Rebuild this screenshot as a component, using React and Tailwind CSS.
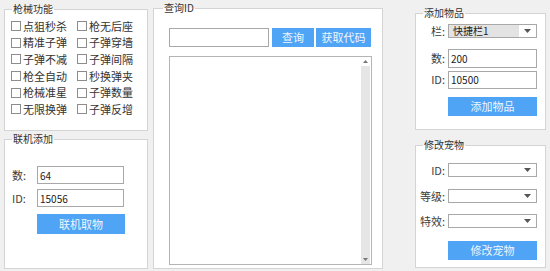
import React from "react";

function Group({ title, className = "", legendClass = "ml-[7px]", children }) {
  return (
    <fieldset className={`border border-[#d4d4d4] bg-white ${className}`}>
      <legend className={`${legendClass} px-[1px] text-[10px] leading-[12px] text-[#333]`}>
        {title}
      </legend>
      {children}
    </fieldset>
  );
}

function Check({ label }) {
  return (
    <div className="flex items-center gap-[2px] text-[11px] leading-none text-[#333]">
      <span className="w-[10px] h-[10px] border border-[#8c8c8c] bg-white" />
      {label}
    </div>
  );
}

function Arrow() {
  return (
    <svg width="7" height="4" viewBox="0 0 7 4">
      <path d="M0 0 L7 0 L3.5 4 Z" fill="#555" />
    </svg>
  );
}

function Input({ value, className = "" }) {
  return (
    <div
      className={`border border-[#a8a8a8] bg-white text-[10px] text-[#222] pl-[2px] flex items-center ${className}`}
    >
      {value}
    </div>
  );
}

function Select({ value, filled }) {
  return (
    <div className="ml-[3px] w-[89px] h-[14px] border border-[#a8a8a8] bg-white flex">
      <div
        className={`flex-1 h-full text-[10px] leading-[12px] pl-[4px] text-[#222] ${
          filled ? "bg-[#e3e3e3]" : ""
        }`}
      >
        {value}
      </div>
      <div className="w-[17px] flex items-center justify-center">
        <Arrow />
      </div>
    </div>
  );
}

function BlueButton({ label, className = "" }) {
  return (
    <button
      className={`bg-[#4fa4f5] text-[#eef6ff] text-[11px] leading-none flex items-center justify-center ${className}`}
    >
      {label}
    </button>
  );
}

const checks = [
  "点狙秒杀", "枪无后座",
  "精准子弹", "子弹穿墙",
  "子弹不减", "子弹间隔",
  "枪全自动", "秒换弹夹",
  "枪械准星", "子弹数量",
  "无限换弹", "子弹反增",
];

export default function App() {
  return (
    <div className="w-[550px] h-[271px] bg-[#f0f0f0] flex font-['Noto_Sans_CJK_SC','Liberation_Sans',sans-serif]">
      {/* left column */}
      <div className="ml-[4px] w-[144px] flex flex-col">
        <Group title="枪械功能" className="mt-[3px] h-[128px]">
          <div className="mt-[3px] pl-[6px] grid grid-cols-[66px_auto] auto-rows-[16.6px]">
            {checks.map((c) => (
              <Check key={c} label={c} />
            ))}
          </div>
        </Group>
        <Group title="联机添加" className="mt-[2px] h-[136px]">
          <div className="pt-[21px] pl-[7px] flex flex-col">
            <div className="flex items-center">
              <span className="w-[25px] text-[11px] text-[#3c3c3c]">数:</span>
              <Input value="64" className="w-[87px] h-[18px]" />
            </div>
            <div className="flex items-center mt-[5px]">
              <span className="w-[25px] text-[11px] text-[#3c3c3c]">ID:</span>
              <Input value="15056" className="w-[87px] h-[18px]" />
            </div>
            <BlueButton label="联机取物" className="ml-[25px] mt-[7px] w-[88px] h-[20px]" />
          </div>
        </Group>
      </div>

      {/* middle column */}
      <Group title="查询ID" legendClass="ml-[9px]" className="ml-[5px] mt-[2px] w-[230px] h-[267px]">
        <div className="pt-[14px] pl-[15px]">
          <div className="flex">
            <Input value="" className="w-[100px] h-[19px]" />
            <BlueButton label="查询" className="ml-[3px] w-[42px] h-[19px]" />
            <BlueButton label="获取代码" className="ml-[2px] w-[55px] h-[19px]" />
          </div>
          <div className="mt-[9px] w-[203px] h-[209px] border border-[#b4b4b4] bg-white flex">
            <div className="flex-1" />
            <div className="w-[9px] mr-[1px] flex flex-col">
              <div className="h-[9px] flex items-center justify-center">
                <svg width="5" height="3" viewBox="0 0 5 3">
                  <path d="M0 3 L5 3 L2.5 0 Z" fill="#777" />
                </svg>
              </div>
              <div className="flex-1 bg-[#e6e6e6] flex items-end justify-center pb-[3px]">
                <svg width="5" height="3" viewBox="0 0 5 3">
                  <path d="M0 0 L5 0 L2.5 3 Z" fill="#777" />
                </svg>
              </div>
            </div>
          </div>
        </div>
      </Group>

      {/* right column */}
      <div className="ml-[32px] w-[131px] flex flex-col">
        <Group title="添加物品" className="mt-[7px] h-[123px]">
          <div className="pt-[4px] flex flex-col">
            <div className="flex items-center">
              <span className="w-[29px] text-right text-[11px] text-[#3c3c3c]">栏:</span>
              <Select value="快捷栏1" filled />
            </div>
            <div className="flex items-center mt-[9px]">
              <span className="w-[29px] text-right text-[11px] text-[#3c3c3c]">数:</span>
              <Input value="200" className="ml-[3px] w-[89px] h-[19px]" />
            </div>
            <div className="flex items-center mt-[3px]">
              <span className="w-[29px] text-right text-[11px] text-[#3c3c3c]">ID:</span>
              <Input value="10500" className="ml-[3px] w-[89px] h-[18px]" />
            </div>
            <BlueButton label="添加物品" className="ml-[32px] mt-[8px] w-[89px] h-[19px]" />
          </div>
        </Group>
        <Group title="修改宠物" className="mt-[9px] h-[129px]">
          <div className="pt-[11px] flex flex-col">
            <div className="flex items-center">
              <span className="w-[29px] text-right text-[11px] text-[#3c3c3c]">ID:</span>
              <Select value="" />
            </div>
            <div className="flex items-center mt-[9px]">
              <span className="w-[29px] text-right text-[11px] text-[#3c3c3c]">等级:</span>
              <Select value="" />
            </div>
            <div className="flex items-center mt-[9px]">
              <span className="w-[29px] text-right text-[11px] text-[#3c3c3c]">特效:</span>
              <Select value="" />
            </div>
            <BlueButton label="修改宠物" className="ml-[32px] mt-[11px] w-[89px] h-[19px]" />
          </div>
        </Group>
      </div>
    </div>
  );
}
